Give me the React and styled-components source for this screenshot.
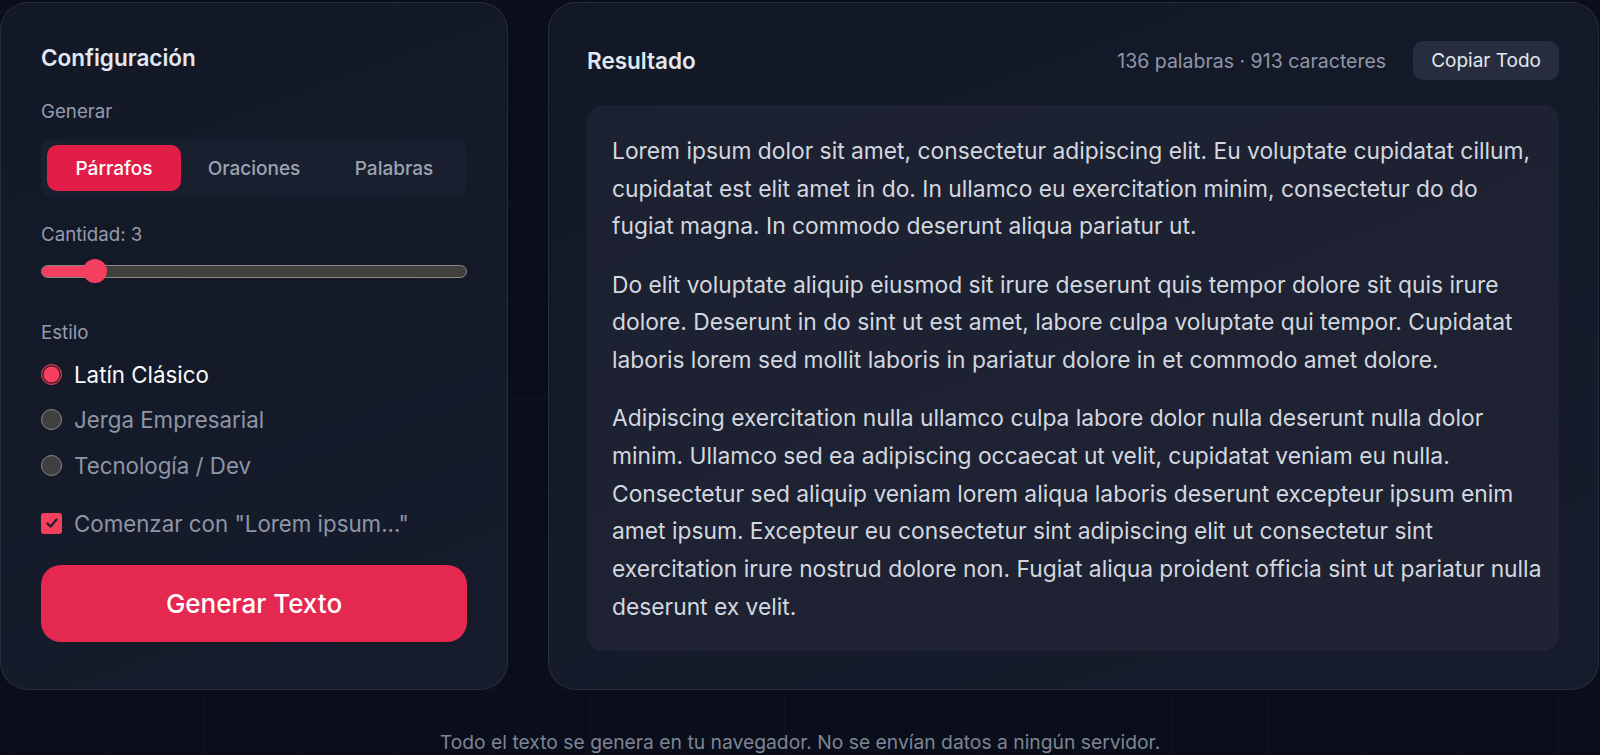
import React, { useState } from "react";
import styled, { createGlobalStyle } from "styled-components";

const GlobalStyle = createGlobalStyle`
  html, body {
    margin: 0;
    padding: 0;
  }
  body {
    background-color: #0a0e1a;
    background-image:
      linear-gradient(rgba(255, 255, 255, 0.025) 1px, transparent 1px),
      linear-gradient(90deg, rgba(255, 255, 255, 0.025) 1px, transparent 1px);
    background-size: 96.75px 96.75px;
    background-position: 10px 11px;
    font-family: Inter, "Noto Sans", sans-serif;
    overflow: hidden;
  }
`;

const Page = styled.div`
  width: 1600px;
  height: 755px;
  padding-top: 2px;
  box-sizing: border-box;
`;

const Layout = styled.main`
  width: 1599px;
  height: 688px;
  display: grid;
  grid-template-columns: 508px 1fr;
  gap: 40px;
`;

const Panel = styled.section`
  box-sizing: border-box;
  border: 1px solid rgba(148, 163, 184, 0.14);
  border-radius: 28px;
  background: linear-gradient(160deg, #131827 0%, #171c2c 100%);
  padding: ${(p) => p.$pad};
  display: flex;
  flex-direction: column;
  min-width: 0;
`;

const PanelTitle = styled.h2`
  margin: 0;
  font-size: 22.5px;
  line-height: 30px;
  font-weight: 600;
  color: #e2e8f0;
`;

const FieldLabel = styled.div`
  margin-top: ${(p) => p.$top}px;
  margin-bottom: ${(p) => p.$bottom}px;
  font-size: 18.7px;
  line-height: 24px;
  color: #959cab;
`;

const Segmented = styled.div`
  height: 58px;
  box-sizing: border-box;
  padding: 6px;
  display: grid;
  grid-template-columns: repeat(3, 1fr);
  gap: 6px;
  background: #1a1f2f;
  border-radius: 12px;
`;

const Tab = styled.button`
  border: none;
  border-radius: 10px;
  font-family: inherit;
  font-size: 19px;
  font-weight: 500;
  cursor: pointer;
  background: ${(p) => (p.$active ? "#e11d48" : "transparent")};
  color: ${(p) => (p.$active ? "#ffffff" : "#9ca3af")};
`;

const SliderWrap = styled.div`
  position: relative;
  height: 24px;
  display: flex;
  align-items: center;
`;

const Track = styled.div`
  position: relative;
  width: 100%;
  height: 13px;
  box-sizing: border-box;
  border: 1.5px solid #8a8a8a;
  border-radius: 7px;
  background: #40403d;
  overflow: hidden;
`;

const Fill = styled.div`
  height: 100%;
  background: #f43f5e;
`;

const Thumb = styled.div`
  position: absolute;
  top: 0;
  width: 24px;
  height: 24px;
  margin-left: -12px;
  border-radius: 50%;
  background: #f43f5e;
`;

const OptionList = styled.div`
  display: flex;
  flex-direction: column;
  gap: 15.5px;
`;

const OptionRow = styled.label`
  display: flex;
  align-items: center;
  gap: 12px;
  height: 30px;
  font-size: 22.3px;
  color: ${(p) => (p.$on ? "#f8fafc" : "#8e95a4")};
  cursor: pointer;
  margin-top: ${(p) => p.$top || 0}px;
`;

const RadioDot = styled.span`
  width: 21px;
  height: 21px;
  box-sizing: border-box;
  border-radius: 50%;
  flex-shrink: 0;
  background: ${(p) => (p.$on ? "#f43f5e" : "#3f3f3f")};
  border: 1.5px solid ${(p) => (p.$on ? "#d9405a" : "#8a8a8a")};
  box-shadow: ${(p) => (p.$on ? "inset 0 0 0 1.5px #3a1c26" : "none")};
`;

const CheckBox = styled.span`
  width: 21px;
  height: 21px;
  border-radius: 3px;
  flex-shrink: 0;
  background: #f43f5e;
  display: flex;
  align-items: center;
  justify-content: center;
`;

const GenerateButton = styled.button`
  margin-top: 27px;
  height: 77px;
  border: none;
  border-radius: 20px;
  background: #e5284f;
  color: #ffffff;
  font-family: inherit;
  font-size: 26px;
  font-weight: 500;
  cursor: pointer;
`;

const Header = styled.div`
  display: flex;
  align-items: center;
  height: 39px;
`;

const Stats = styled.span`
  margin-left: auto;
  margin-right: 27px;
  font-size: 19.5px;
  color: #8f97a8;
`;

const CopyButton = styled.button`
  height: 39px;
  padding: 0 18px;
  border: none;
  border-radius: 10px;
  background: #272d3e;
  color: #e2e8f0;
  font-family: inherit;
  font-size: 19px;
  cursor: pointer;
`;

const Output = styled.div`
  margin-top: 25px;
  flex: 1;
  border-radius: 16px;
  background: linear-gradient(160deg, #1c2132 0%, #1f2334 100%);
  padding: 27px 20px 23px 25px;
  overflow: hidden;
`;

const Paragraph = styled.p`
  margin: 0 0 20.5px;
  font-size: 22.8px;
  line-height: 37.7px;
  color: #d3d7df;
  white-space: pre;
  &:last-child {
    margin-bottom: 0;
  }
`;

const Footer = styled.footer`
  margin-top: 40px;
  text-align: center;
  font-size: 19.3px;
  line-height: 24px;
  color: #7d8594;
`;

const MODES = ["Párrafos", "Oraciones", "Palabras"];
const STYLES = ["Latín Clásico", "Jerga Empresarial", "Tecnología / Dev"];

// generated text, split where the reference output wraps
const PARAGRAPHS = [
  [
    "Lorem ipsum dolor sit amet, consectetur adipiscing elit. Eu voluptate cupidatat cillum,",
    "cupidatat est elit amet in do. In ullamco eu exercitation minim, consectetur do do",
    "fugiat magna. In commodo deserunt aliqua pariatur ut.",
  ],
  [
    "Do elit voluptate aliquip eiusmod sit irure deserunt quis tempor dolore sit quis irure",
    "dolore. Deserunt in do sint ut est amet, labore culpa voluptate qui tempor. Cupidatat",
    "laboris lorem sed mollit laboris in pariatur dolore in et commodo amet dolore.",
  ],
  [
    "Adipiscing exercitation nulla ullamco culpa labore dolor nulla deserunt nulla dolor",
    "minim. Ullamco sed ea adipiscing occaecat ut velit, cupidatat veniam eu nulla.",
    "Consectetur sed aliquip veniam lorem aliqua laboris deserunt excepteur ipsum enim",
    "amet ipsum. Excepteur eu consectetur sint adipiscing elit ut consectetur sint",
    "exercitation irure nostrud dolore non. Fugiat aliqua proident officia sint ut pariatur nulla",
    "deserunt ex velit.",
  ],
];

const App = () => {
  const [mode, setMode] = useState(0);
  const [style, setStyle] = useState(0);
  const amount = 3;
  const min = 1;
  const max = 20;
  const pct = ((amount - min) / (max - min)) * 100;
  const thumbPos = `calc(12px + (100% - 24px) * ${pct / 100})`;

  return (
    <Page>
      <GlobalStyle />
      <Layout>
        <Panel $pad="40px">
          <PanelTitle>Configuración</PanelTitle>

          <FieldLabel $top={27} $bottom={15}>Generar</FieldLabel>
          <Segmented>
            {MODES.map((m, i) => (
              <Tab key={m} $active={mode === i} onClick={() => setMode(i)}>
                {m}
              </Tab>
            ))}
          </Segmented>

          <FieldLabel $top={26} $bottom={12}>Cantidad: {amount}</FieldLabel>
          <SliderWrap>
            <Track>
              <Fill style={{ width: thumbPos }} />
            </Track>
            <Thumb style={{ left: thumbPos }} />
          </SliderWrap>

          <FieldLabel $top={38} $bottom={14}>Estilo</FieldLabel>
          <OptionList>
            {STYLES.map((s, i) => (
              <OptionRow key={s} $on={style === i} onClick={() => setStyle(i)}>
                <RadioDot $on={style === i} />
                {s}
              </OptionRow>
            ))}
          </OptionList>

          <OptionRow $top={28}>
            <CheckBox>
              <svg width="14" height="14" viewBox="0 0 14 14">
                <path
                  d="M2.5 7.5 L5.5 10.5 L11.5 3.5"
                  fill="none"
                  stroke="#2a1f2b"
                  strokeWidth="2.4"
                  strokeLinecap="round"
                  strokeLinejoin="round"
                />
              </svg>
            </CheckBox>
            Comenzar con "Lorem ipsum..."
          </OptionRow>

          <GenerateButton>Generar Texto</GenerateButton>
        </Panel>

        <Panel $pad="38px 39px 38px 38px">
          <Header>
            <PanelTitle>Resultado</PanelTitle>
            <Stats>136 palabras · 913 caracteres</Stats>
            <CopyButton>Copiar Todo</CopyButton>
          </Header>
          <Output>
            {PARAGRAPHS.map((lines, i) => (
              <Paragraph key={i}>{lines.join("\n")}</Paragraph>
            ))}
          </Output>
        </Panel>
      </Layout>
      <Footer>
        Todo el texto se genera en tu navegador. No se envían datos a ningún servidor.
      </Footer>
    </Page>
  );
};

export default App;
